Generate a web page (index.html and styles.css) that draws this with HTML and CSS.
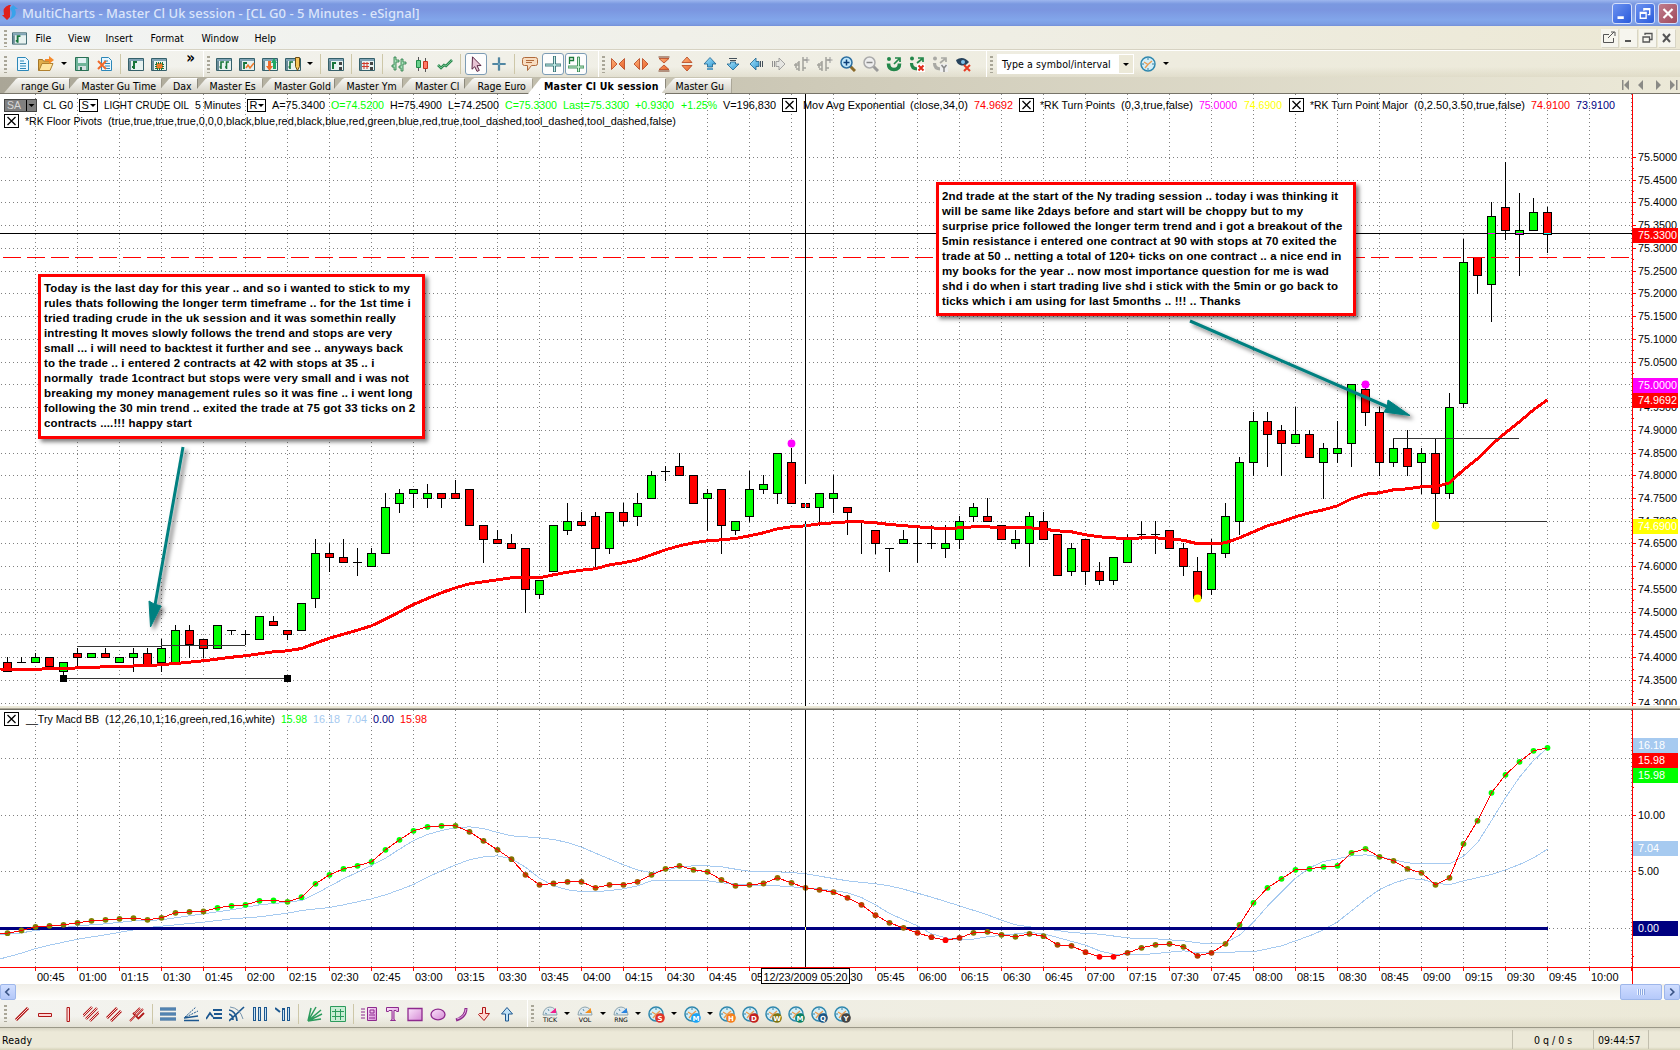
FILE: index.html
```
<!DOCTYPE html>
<html>
<head>
  <meta charset="utf-8">
  <title>MultiCharts</title>
  <link rel="stylesheet" href="styles.css">
</head>
<body>
<svg class="sprite">
  <defs>
    <linearGradient id="gOrange" x1="0" y1="0" x2="1" y2="1"><stop offset="0" stop-color="#ffb27a"/><stop offset="1" stop-color="#e8622a"/></linearGradient>
    <linearGradient id="gBlue" x1="0" y1="0" x2="1" y2="1"><stop offset="0" stop-color="#a8e6ff"/><stop offset="1" stop-color="#2f96cf"/></linearGradient>
    <linearGradient id="gPink" x1="0" y1="0" x2="1" y2="1"><stop offset="0" stop-color="#fbe4fb"/><stop offset="1" stop-color="#d58bd5"/></linearGradient>
  </defs>
  <symbol id="win" viewBox="0 0 16 16"><path d="M.5 2.500h15v12H.5z" fill="#e8f2f0" stroke="#35606a"/><path d="M1 3h14v2H1z" fill="#7fa3b5"/><path d="M1 5h2v9H1z" fill="#6a8b98"/></symbol>
  <symbol id="bars" viewBox="0 0 16 16"><path d="M5 13V6h3M3.500 11H5M10.500 13V6H13M9 11h1.500" fill="none" stroke="#17753b" stroke-width="1.600"/></symbol>
  <symbol id="logo" viewBox="0 0 16 16"><path d="M7 1Q0 3 2 11H0l5 5 3-3V6Q7 3 9 1z" fill="#e0201c"/><path d="M9 15q7-3 4-10h3l-5-4-3 4q4 3 0 10z" fill="#39a3ea"/></symbol>
  <symbol id="chartwin" viewBox="0 0 16 16"><use href="#win"/><path d="M6 13V6h3M4 11h2" fill="none" stroke="#17753b" stroke-width="2"/></symbol>
  <symbol id="doc" viewBox="0 0 16 16"><path d="M2.500 1.500h8l3 3v10h-11z" fill="#e8f7ff" stroke="#2c87b8"/><path d="M5 5h4M5 7.500h6M5 10h6M5 12.500h6" stroke="#2c87b8"/></symbol>
  <symbol id="open" viewBox="0 0 16 16"><path d="M.5 14.500v-11h4l1 1.500h6v9z" fill="#e0ad4a" stroke="#a57628"/><path d="M1 14.500L4 7.500h11l-3 7z" fill="#ffe6a0" stroke="#b0812f"/><path d="M7 5V3h4V0l5 4-5 4V5z" fill="#f58a2b"/></symbol>
  <symbol id="save" viewBox="0 0 16 16"><path d="M1.500 1.500h13v13h-13z" fill="#6fb49a" stroke="#2a7055"/><path d="M4 2h8v5H4z" fill="#e4f2f4"/><path d="M4 10h8v4H4z" fill="#d5dfe2"/><path d="M6 11h2v3H6z" fill="#2a7055"/></symbol>
  <symbol id="del" viewBox="0 0 16 16"><path d="M4.500 1.500h7l3 3v10h-10z" fill="#e8f7ff" stroke="#2c87b8"/><path d="M7 5h4M8 7.500h5M8 10h5M8 12.500h5" stroke="#2c87b8"/><path d="M1 5l8 8M9 5l-8 8" stroke="#ef6a2b" stroke-width="2"/></symbol>
  <symbol id="chip" viewBox="0 0 16 16"><use href="#win"/><path d="M5 7h7v6H5z" fill="#ef7a2b" stroke="#17753b" stroke-width="2" stroke-dasharray="1 1"/></symbol>
  <symbol id="w-bars" viewBox="0 0 16 16"><use href="#win"/><use href="#bars"/></symbol>
  <symbol id="w-line" viewBox="0 0 16 16"><use href="#win"/><path d="M5 13V7h3" fill="none" stroke="#17753b" stroke-width="1.800"/><path d="M7 12l2-3 2 3 4-5" fill="none" stroke="#ef7a2b" stroke-width="1.500"/></symbol>
  <symbol id="w-arr" viewBox="0 0 16 16"><use href="#win"/><path d="M6 5v5H4l3.500 5L11 10H9V5z" fill="#ef6a2b"/><path d="M11 13V7H9l3-5 3 5h-1v6z" fill="#21a765"/></symbol>
  <symbol id="w-pen" viewBox="0 0 16 16"><use href="#win"/><path d="M5 13V6h3M3.500 11H5" fill="none" stroke="#17753b" stroke-width="1.600"/><path d="M10.500 1.500h4v9l-2 4-2-4z" fill="#f6c55a" stroke="#6b4a14"/></symbol>
  <symbol id="w-set" viewBox="0 0 16 16"><use href="#win"/><path d="M5 13V7h3" fill="none" stroke="#17753b" stroke-width="2"/><path d="M11 6h3v3h-3zM11 11h3v3h-3z" fill="#444"/></symbol>
  <symbol id="w-grid" viewBox="0 0 16 16"><use href="#win"/><path d="M3 7.500h7M3 10.500h7M5 6v7M8 6v7" stroke="#d0392b"/><path d="M11 6h3v3h-3zM11 11h3v3h-3z" fill="#444"/></symbol>
  <symbol id="ohlc" viewBox="0 0 16 16"><path d="M3 1h2v3h3v2H5v8H3v-3H1V9h2zM10 3h2v3h3v2h-3v7h-2v-3H8v-2h2z" fill="#a8e0b8" stroke="#247a43" stroke-width=".8"/></symbol>
  <symbol id="candles" viewBox="0 0 16 16"><path d="M4.500 1v14M11.500 2v14" stroke="#555"/><path d="M2.500 4.500h4v7h-4z" fill="#68cf8b" stroke="#1f8a47"/><path d="M9.500 5.500h4v7h-4z" fill="#ff7a66" stroke="#c8321c"/></symbol>
  <symbol id="check" viewBox="0 0 16 16"><path d="M1 9l3 3 3-3 2 1 6-6" fill="none" stroke="#2a8a50" stroke-width="2.600"/><path d="M1 9l3 3 3-3 2 1 6-6" fill="none" stroke="#7fc896" stroke-width=".8"/></symbol>
  <symbol id="cursor" viewBox="0 0 16 16"><path d="M4.500.8l8.500 8.700-4 .2 2.300 4.700-2.300 1-2.200-4.700-2.800 2.500z" fill="#e8c4d4" stroke="#5a2745"/></symbol>
  <symbol id="plus" viewBox="0 0 16 16"><path d="M8 1.500v13M1.500 8h13" stroke="#27607f" stroke-width="2.200"/><path d="M8 2v12M2 8h12" stroke="#9ed1ea" stroke-width=".7"/></symbol>
  <symbol id="note" viewBox="0 0 16 16"><path d="M2.500 1.500h11q2 0 2 2v4q0 2-2 2h-4l-4 5v-5h-3q-2 0-2-2v-4q0-2 2-2z" fill="#f8dcc0" stroke="#b06a3c"/><path d="M4 4.500h8M4 6.500h6" stroke="#b06a3c"/></symbol>
  <symbol id="crossT" viewBox="0 0 16 16"><path d="M8.500 0h2v8H16v2h-5.500v6h-2v-6H0V8h8.500z" fill="#c9f0ea" stroke="#1f5d63" stroke-width=".8"/></symbol>
  <symbol id="crossP" viewBox="0 0 16 16"><path d="M9.500 1h2v9H16v2h-4.500v4h-2v-4H0v-2h9.500z" fill="#d0f4d8" stroke="#1d7a3b" stroke-width=".8"/><path d="M1.500 8V1.500h4v3h-4" fill="none" stroke="#1d7a3b" stroke-width="1.300"/></symbol>
  <symbol id="hin" viewBox="0 0 16 16"><path d="M1.500 2.500v11L7 8zM14.500 2.500v11L9 8z" fill="url(#gOrange)" stroke="#b4431c" stroke-width=".8"/></symbol>
  <symbol id="hout" viewBox="0 0 16 16"><path d="M6.500 2.500v11L1 8zM9.500 2.500v11L15 8z" fill="url(#gOrange)" stroke="#b4431c" stroke-width=".8"/></symbol>
  <symbol id="vin" viewBox="0 0 16 16"><path d="M3 2.500h10L8 7zM3 13.500h10L8 9z" fill="url(#gOrange)" stroke="#b4431c" stroke-width=".8"/><path d="M2.500 1h11M2.500 15h11" stroke="#7a3a20"/></symbol>
  <symbol id="vout" viewBox="0 0 16 16"><path d="M3 6.500h10L8 1zM3 9.500h10L8 15z" fill="url(#gOrange)" stroke="#b4431c" stroke-width=".8"/></symbol>
  <symbol id="up" viewBox="0 0 16 16"><path d="M8 1.500l6 6.500h-3.500v3h-5V8H2z" fill="url(#gBlue)" stroke="#1d628e" stroke-width=".8"/><path d="M5 13h6" stroke="#2f86ba" stroke-width="1.500"/></symbol>
  <symbol id="down" viewBox="0 0 16 16"><path d="M8 14L2 8h3.500V6h5v2H14z" fill="url(#gBlue)" stroke="#1d628e" stroke-width=".8"/><path d="M4 2.500h8M5 4.500h6" stroke="#44505a"/></symbol>
  <symbol id="left" viewBox="0 0 16 16"><path d="M2 8l6-6v3.500h3v5H8V14z" fill="url(#gBlue)" stroke="#1d628e" stroke-width=".8"/><path d="M12.500 5v6M14.500 5v6" stroke="#44505a"/></symbol>
  <symbol id="right" viewBox="0 0 16 16"><path d="M14 8L8 2v3.500H5v5h3V14z" fill="#e6e6e2" stroke="#909090" stroke-width=".8"/><path d="M3.500 5v6M1.500 5v6" stroke="#909090"/></symbol>
  <symbol id="gbars" viewBox="0 0 16 16"><path d="M9 1v14M5 5v10M9 4h4M9 12h3M5 13H2M5 7H3M0 9h5M2 7v5" stroke="#a3a39c" stroke-width="1.500"/><path d="M13 1v6M10.500 4h5" stroke="#999"/></symbol>
  <symbol id="zin" viewBox="0 0 16 16"><path d="M10 10l5 5" stroke="#8a6a2a" stroke-width="3"/><circle cx="6.500" cy="6.500" r="5.500" fill="#bfe6fb" stroke="#2c6ea0" stroke-width="1.500"/><path d="M6.500 3.500v6M3.500 6.500h6" stroke="#0c3f78" stroke-width="1.500"/></symbol>
  <symbol id="zout" viewBox="0 0 16 16"><path d="M10 10l5 5" stroke="#999" stroke-width="3"/><circle cx="6.500" cy="6.500" r="5.500" fill="#eee" stroke="#aaa" stroke-width="1.500"/><path d="M3.500 6.500h6" stroke="#888" stroke-width="1.500"/></symbol>
  <symbol id="magnet" viewBox="0 0 16 16"><path d="M2.500 7.500q0 6 5.500 6t5.500-6" fill="none" stroke="currentColor" stroke-width="3.600"/><path d="M8 8l5-5M9 2h5v4" fill="none" stroke="currentColor" stroke-width="1.700"/><circle cx="3" cy="3" r="2" fill="currentColor"/></symbol>
  <symbol id="magS" viewBox="0 0 16 16"><path d="M2.500 7q0 6 6 6" fill="none" stroke="currentColor" stroke-width="3.200"/><path d="M8 7l5-4M9 2h5v4" fill="none" stroke="currentColor" stroke-width="1.700"/><circle cx="3" cy="2.500" r="2" fill="currentColor"/></symbol>
  <symbol id="eye" viewBox="0 0 16 16"><path d="M1 4q7-5 13 2-4 5-9 3Q2 8 1 4z" fill="#27435c"/><circle cx="8" cy="6" r="2" fill="#7ec2ec"/><path d="M9 9l6 6M15 9l-6 6" stroke="#e63a22" stroke-width="2"/></symbol>
  <symbol id="clock" viewBox="0 0 16 16"><circle cx="8" cy="8" r="7" fill="#d3eff9" stroke="#2f87ad" stroke-width="1.500"/><path d="M4 6l4 2.500L12 5M8 8.500L5 12" fill="none" stroke="#ee9a4c" stroke-width="1.300"/><path d="M8 2v2M8 12v2M2 8h2M12 8h2" stroke="#3b7f9d"/></symbol>
  <symbol id="gauge" viewBox="0 0 16 16"><path d="M1 9a7 8 0 0 1 14 0z" fill="#dfeaf0" stroke="#8fa5ae"/><path d="M3 7l2 1M6 3l1 2" stroke="#5f94ad"/></symbol>
  <symbol id="tline" viewBox="0 0 16 16"><path d="M2 14L14 2" stroke="#b01818" stroke-width="3"/><path d="M2 14L14 2" stroke="#ffd0d0"/></symbol>
  <symbol id="hline" viewBox="0 0 16 16"><path d="M1.500 7.500h13v3h-13z" fill="#ffd8d8" stroke="#b01818"/></symbol>
  <symbol id="vline" viewBox="0 0 16 16"><path d="M7 1.500h2.500v14H7z" fill="#ffd8d8" stroke="#b01818"/></symbol>
  <symbol id="chan3" viewBox="0 0 16 16"><path d="M0 10L9 1M3 13L14 2M7 15L16 6" stroke="#b01818" stroke-width="2.400"/><path d="M0 10L9 1M3 13L14 2M7 15L16 6" stroke="#ffd4d4"/></symbol>
  <symbol id="chan2" viewBox="0 0 16 16"><path d="M1 12L11 2M5 15L15 5" stroke="#b01818" stroke-width="2.600"/><path d="M1 12L11 2M5 15L15 5" stroke="#ffd4d4"/></symbol>
  <symbol id="fork" viewBox="0 0 16 16"><path d="M1 15l6-6M4 7l6 6M5 8l6-6M7 10l7-7M10 12l5-5" stroke="#b01818" stroke-width="1.800"/><path d="M1 15L14 3M5 8l6-6" stroke="#ffc4c4" stroke-width=".7"/></symbol>
  <symbol id="fib" viewBox="0 0 16 16"><path d="M0 3h16M0 8h16M0 13h16" stroke="#1c578f" stroke-width="2.800"/><path d="M0 3h16M0 8h16M0 13h16" stroke="#b9d8f2" stroke-width=".7"/></symbol>
  <symbol id="fan" viewBox="0 0 16 16"><path d="M1 14.500h15M1 12L15 10" stroke="#1c578f" stroke-width="1.500"/><path d="M2 11L13 1M3 11l12-6" stroke="#1c578f" stroke-dasharray="2 1"/></symbol>
  <symbol id="fibx" viewBox="0 0 16 16"><path d="M0 13l4-6 3 4M7 4h9M8 8h8M7 12h9" fill="none" stroke="#1c578f" stroke-width="1.800"/></symbol>
  <symbol id="arcs" viewBox="0 0 16 16"><path d="M0 4q7 1 8 11M0 8q4 1 4 6M0 15L15 1" fill="none" stroke="#1c578f" stroke-width="1.700"/><path d="M1 1q10 1 13 12" fill="none" stroke="#7794ac"/></symbol>
  <symbol id="tz" viewBox="0 0 16 16"><path d="M2.500 1v14M7.500 1v14M13.500 1v14" stroke="#1c578f" stroke-width="3"/><path d="M2.500 2v12M7.500 2v12M13.500 2v12" stroke="#c7e2f5"/></symbol>
  <symbol id="tzx" viewBox="0 0 16 16"><path d="M8.500 2v13M13.500 1v14" stroke="#1c578f" stroke-width="3"/><path d="M0 2l5 4" stroke="#1c578f" stroke-width="2"/><path d="M8.500 4v10M13.500 2v12" stroke="#c7e2f5"/></symbol>
  <symbol id="gann" viewBox="0 0 16 16"><path d="M1 15L4 2M1 15L9 1M1 15L14 4M1 15l14-7M1 15l13-2" stroke="#2c9b5c" stroke-width="1.500"/></symbol>
  <symbol id="ggrid" viewBox="0 0 16 16"><path d="M.5.5h15v15H.5z" fill="#c8ecd4" stroke="#2c9b5c"/><path d="M5.500 3v11M10.500 3v11M2 5.500h12M2 10.500h12" stroke="#2c9b5c"/></symbol>
  <symbol id="calc" viewBox="0 0 16 16"><path d="M6.500 1.500h9v13h-9z" fill="url(#gPink)" stroke="#8e2a8e"/><path d="M9 4h4v3H9zM8 9h6M8 12h6M0 3h4M0 6h4M0 9h4M0 12h4" fill="none" stroke="#8e2a8e"/></symbol>
  <symbol id="text" viewBox="0 0 16 16"><path d="M2.500 1.500h12v4h-2l-.5-1H10v9l1.500 1h-5L8 13.500v-9H5l-.5 1h-2z" fill="url(#gPink)" stroke="#8e2a8e"/></symbol>
  <symbol id="rect" viewBox="0 0 16 16"><path d="M1 2.500h14v12H1z" fill="url(#gPink)" stroke="#8e2a8e" stroke-width="1.300"/></symbol>
  <symbol id="oval" viewBox="0 0 16 16"><ellipse cx="8" cy="8.500" rx="7" ry="5.300" fill="url(#gPink)" stroke="#8e2a8e" stroke-width="1.300"/></symbol>
  <symbol id="arc" viewBox="0 0 16 16"><path d="M13 2q0 9-10 12" fill="none" stroke="#8e2a8e" stroke-width="3"/><path d="M13 3q-1 8-9 10" fill="none" stroke="#e3b0e3"/></symbol>
  <symbol id="adn" viewBox="0 0 16 16"><path d="M6.500 1.500h3v6h4L8 14.500 2.500 8.500l1-1h3z" fill="#ffd6d0" stroke="#b01818"/></symbol>
  <symbol id="aup" viewBox="0 0 16 16"><path d="M6.500 15h3V8h4L8 1.500 2.500 8h4z" fill="#bfe2f8" stroke="#1c578f"/></symbol>
</svg>

<div class="window">
  <div class="titlebar">
    <svg class="ic"><use href="#logo"/></svg>
    <span class="title">MultiCharts - Master Cl Uk session - [CL G0 - 5 Minutes - eSignal]</span>
    <div class="winbtns">
      <svg class="wb" viewBox="0 0 20 20"><path d="M5 13h7v3H5z"/></svg>
      <svg class="wb" viewBox="0 0 20 20"><path d="M8 4h8v8h-3v-1.500h1.500V6.500h-5V7H8zM4 8h8v8H4zm1.500 2.500v4h5v-4z" fill-rule="evenodd"/></svg>
      <svg class="wb close" viewBox="0 0 20 20"><path d="M5 5l10 10M15 5L5 15" stroke="#fff" stroke-width="2.400"/></svg>
    </div>
  </div>

  <div class="menubar">
    <i class="grip"></i>
    <svg class="ic"><use href="#chartwin"/></svg>
    <span class="m-file">File</span><span class="m-view">View</span><span class="m-ins">Insert</span><span class="m-fmt">Format</span><span class="m-win">Window</span><span>Help</span>
    <div class="childbtns">
      <svg viewBox="0 0 17 18"><path d="M8 5.500H2.500v8h10V9M7 9l6-6M10 3h4v4" fill="none" stroke="#555"/></svg>
      <svg viewBox="0 0 17 18"><path d="M5 11h6v2H5z" fill="#555"/></svg>
      <svg viewBox="0 0 17 18"><path d="M6 6V4.500h7v6h-2M4 8h6.500v5H4z" fill="none" stroke="#555" stroke-width="1.300"/></svg>
      <svg viewBox="0 0 17 18"><path d="M5 5l7 8M12 5l-7 8" stroke="#555" stroke-width="2"/></svg>
    </div>
  </div>

  <div class="toolbar">
    <div class="band band-std">
      <i class="grip"></i>
      <svg class="ic"><use href="#doc"/></svg>
      <svg class="ic"><use href="#open"/></svg><i class="dd"></i>
      <svg class="ic"><use href="#save"/></svg>
      <svg class="ic"><use href="#del"/></svg>
      <i class="sep"></i>
      <svg class="ic"><use href="#chartwin"/></svg>
      <svg class="ic"><use href="#chip"/></svg>
      <b class="more">»</b>
    </div>
    <div class="band band-chart">
      <i class="grip"></i>
      <svg class="ic"><use href="#w-bars"/></svg>
      <svg class="ic"><use href="#w-line"/></svg>
      <svg class="ic"><use href="#w-arr"/></svg>
      <svg class="ic"><use href="#w-pen"/></svg><i class="dd"></i>
      <i class="sep"></i>
      <svg class="ic"><use href="#w-set"/></svg>
      <i class="sep"></i>
      <svg class="ic"><use href="#w-grid"/></svg>
      <i class="sep"></i>
      <svg class="ic"><use href="#ohlc"/></svg>
      <svg class="ic"><use href="#candles"/></svg>
      <svg class="ic"><use href="#check"/></svg>
      <i class="sep"></i>
      <svg class="ic on"><use href="#cursor"/></svg>
      <svg class="ic"><use href="#plus"/></svg>
      <i class="sep"></i>
      <svg class="ic"><use href="#note"/></svg>
      <svg class="ic on"><use href="#crossT"/></svg>
      <svg class="ic on"><use href="#crossP"/></svg>
    </div>
    <div class="band band-zoom">
      <i class="grip"></i>
      <svg class="ic"><use href="#hin"/></svg>
      <svg class="ic"><use href="#hout"/></svg>
      <svg class="ic"><use href="#vin"/></svg>
      <svg class="ic"><use href="#vout"/></svg>
      <svg class="ic"><use href="#up"/></svg>
      <svg class="ic"><use href="#down"/></svg>
      <svg class="ic"><use href="#left"/></svg>
      <svg class="ic"><use href="#right"/></svg>
      <svg class="ic"><use href="#gbars"/></svg>
      <svg class="ic"><use href="#gbars"/></svg>
      <svg class="ic"><use href="#zin"/></svg>
      <svg class="ic"><use href="#zout"/></svg>
      <svg class="ic green" viewBox="0 0 16 16"><use href="#magnet"/></svg>
      <svg class="ic green" viewBox="0 0 16 16"><use href="#magS"/><path d="M8 8h8v8H8z" fill="#fff"/><path d="M9.500 9.500l5 5M14.500 9.500l-5 5" stroke="#e02a1a" stroke-width="2"/></svg>
      <svg class="ic grey" viewBox="0 0 16 16"><use href="#magS"/><path d="M8 8h8v8H8z" fill="#eee"/><path d="M9.500 9l2.500 3 2.500-3M12 12v4" stroke="#888" stroke-width="1.500" fill="none"/></svg>
      <svg class="ic"><use href="#eye"/></svg>
    </div>
    <div class="band band-sym">
      <i class="grip"></i>
      <div class="combo"><span>Type a symbol/interval</span><i class="dd"></i></div>
      <svg class="ic clk"><use href="#clock"/></svg><i class="dd"></i>
    </div>
  </div>

  <div class="tabs">
    <span class="tab t1">range Gu</span>
    <span class="tab t2">Master Gu Time</span>
    <span class="tab t3">Dax</span>
    <span class="tab t4">Master Es</span>
    <span class="tab t5">Master Gold</span>
    <span class="tab t6">Master Ym</span>
    <span class="tab t7">Master Cl</span>
    <span class="tab t8">Rage Euro</span>
    <span class="tab t9 active">Master Cl Uk session</span>
    <span class="tab t10">Master Gu</span>
    <svg class="tabnav" viewBox="0 0 60 12"><path d="M2 1v10h1.500V1zM9 1v10L4 6zM23 1v10l-5-5zM36 1v10l5-5zM50 1v10l5-5zM56 1v10h1.500V1z"/></svg>
  </div>

  <div class="chart">
    <svg id="plot" width="1680" height="890" viewBox="0 94 1680 890"></svg>
    <div class="callout c1">
      <p>Today is the last day for this year .. and so i wanted to stick to my</p>
      <p>rules thats following the longer term timeframe .. for the 1st time i</p>
      <p>tried trading crude in the uk session and it was somethin really</p>
      <p>intresting It moves slowly follows the trend and stops are very</p>
      <p>small ... i will need to backtest it further and see .. anyways back</p>
      <p>to the trade .. i entered 2 contracts at 42 with stops at 35 .. i</p>
      <p>normally&nbsp; trade 1contract but stops were very small and i was not</p>
      <p>breaking my money management rules so it was fine .. i went long</p>
      <p>following the 30 min trend .. exited the trade at 75 got 33 ticks on 2</p>
      <p>contracts ....!!! happy start</p>
    </div>
    <div class="callout c2">
      <p>2nd trade at the start of the Ny trading session .. today i was thinking it</p>
      <p>will be same like 2days before and start will be choppy but to my</p>
      <p>surprise price followed the longer term trend and i got a breakout of the</p>
      <p>5min resistance i entered one contract at 90 with stops at 70 exited the</p>
      <p>trade at 50 .. netting a total of 120+ ticks on one contract .. a nice end in</p>
      <p>my books for the year .. now most importance question for me is wad</p>
      <p>shd i do when i start trading live shd i stick with the 5min or go back to</p>
      <p>ticks which i am using for last 5months .. !!! .. Thanks</p>
    </div>
  </div>

  <div class="scroll">
    <svg class="sb" viewBox="0 0 16 16"><path d="M9.500 4l-4 4 4 4" /></svg>
    <div class="thumb"><i></i><i></i><i></i><i></i></div>
    <svg class="sb" viewBox="0 0 16 16"><path d="M6 4l4 4-4 4"/></svg>
  </div>

  <div class="toolbar drawbar">
    <div class="band band-draw">
      <i class="grip"></i>
      <svg class="ic"><use href="#tline"/></svg>
      <svg class="ic"><use href="#hline"/></svg>
      <svg class="ic"><use href="#vline"/></svg>
      <svg class="ic"><use href="#chan3"/></svg>
      <svg class="ic"><use href="#chan2"/></svg>
      <svg class="ic"><use href="#fork"/></svg>
      <i class="sep"></i>
      <svg class="ic"><use href="#fib"/></svg>
      <svg class="ic"><use href="#fan"/></svg>
      <svg class="ic"><use href="#fibx"/></svg>
      <svg class="ic"><use href="#arcs"/></svg>
      <svg class="ic"><use href="#tz"/></svg>
      <svg class="ic"><use href="#tzx"/></svg>
      <i class="sep"></i>
      <svg class="ic"><use href="#gann"/></svg>
      <svg class="ic"><use href="#ggrid"/></svg>
      <i class="sep"></i>
      <svg class="ic"><use href="#calc"/></svg>
      <svg class="ic"><use href="#text"/></svg>
      <svg class="ic"><use href="#rect"/></svg>
      <svg class="ic"><use href="#oval"/></svg>
      <svg class="ic"><use href="#arc"/></svg>
      <svg class="ic"><use href="#adn"/></svg>
      <svg class="ic"><use href="#aup"/></svg>
    </div>
    <div class="band band-res">
      <i class="grip"></i>
      <svg class="ic" viewBox="0 0 16 16"><use href="#gauge"/><path d="M8 7l6-5v5z" fill="#f0208a"/><text x="8" y="16" class="gt">TICK</text></svg><i class="dd"></i>
      <svg class="ic" viewBox="0 0 16 16"><use href="#gauge"/><path d="M8 7l6-5v5z" fill="#f5901e"/><text x="8" y="16" class="gt">VOL</text></svg><i class="dd"></i>
      <svg class="ic" viewBox="0 0 16 16"><use href="#gauge"/><path d="M8 7l6-5v5z" fill="#2a84e0"/><text x="8" y="16" class="gt">RNG</text></svg><i class="dd"></i>
      <svg class="ic" viewBox="0 0 16 16"><use href="#clock"/><circle cx="12" cy="12" r="4.800" fill="#e03328"/><text x="12" y="14.500" class="bt">S</text></svg><i class="dd"></i>
      <svg class="ic" viewBox="0 0 16 16"><use href="#clock"/><circle cx="12" cy="12" r="4.800" fill="#1aa3f5"/><text x="12" y="14.500" class="bt">M</text></svg><i class="dd"></i>
      <svg class="ic" viewBox="0 0 16 16"><use href="#clock"/><circle cx="12" cy="12" r="4.800" fill="#f5801e"/><text x="12" y="14.500" class="bt">H</text></svg>
      <svg class="ic" viewBox="0 0 16 16"><use href="#clock"/><circle cx="12" cy="12" r="4.800" fill="#c4201e"/><text x="12" y="14.500" class="bt">D</text></svg>
      <svg class="ic" viewBox="0 0 16 16"><use href="#clock"/><circle cx="12" cy="12" r="4.800" fill="#7d7410"/><text x="12" y="14.500" class="bt">W</text></svg>
      <svg class="ic" viewBox="0 0 16 16"><use href="#clock"/><circle cx="12" cy="12" r="4.800" fill="#0d8264"/><text x="12" y="14.500" class="bt">M</text></svg>
      <svg class="ic" viewBox="0 0 16 16"><use href="#clock"/><circle cx="12" cy="12" r="4.800" fill="#1c5482"/><text x="12" y="14.500" class="bt">Q</text></svg>
      <svg class="ic" viewBox="0 0 16 16"><use href="#clock"/><circle cx="12" cy="12" r="4.800" fill="#444"/><text x="12" y="14.500" class="bt">Y</text></svg>
    </div>
  </div>

  <div class="status">
    <span class="ready">Ready</span>
    <span class="quotes">0 q / 0 s</span>
    <span class="time">09:44:57</span>
  </div>
</div>
<script src="chart.js"></script>
</body>
</html>
```

FILE: styles.css
```
body {
    margin: 0;
    width: 1680px;
    height: 1050px;
    overflow: hidden;
    font-family: "DejaVu Sans Condensed", "DejaVu Sans", sans-serif;
    font-stretch: condensed;
    font-size: 10.5px;
    color: #000;
}

.sprite {
    position: absolute;
    width: 0;
    height: 0;
}

.window {
    display: flex;
    flex-direction: column;
    height: 1050px;
    background: #ece9d8;
}

.ic {
    width: 16px;
    height: 16px;
    margin: 0 3.5px;
    flex: none;
    overflow: visible;
}

/* title bar */
.titlebar {
    height: 26px;
    display: flex;
    align-items: center;
    background: linear-gradient(#9db6ee 0, #7a98e0 4px, #7b96e0 10px, #82a6ea 20px, #7d9ee4 24px, #748fd8 26px);
}

.titlebar .ic {
    margin: 0 4px 2px 2px;
}

.title {
    font-family: "Noto Sans", sans-serif;
    font-stretch: normal;
    font-weight: 500;
    font-size: 13px;
    letter-spacing: .03px;
    color: #dbe5fa;
    white-space: nowrap;
}

.winbtns {
    display: flex;
    gap: 3px;
    margin-left: auto;
    margin-right: 2px;
}

.wb {
    width: 18px;
    height: 19px;
    border: 1px solid #d5dffa;
    border-radius: 3px;
    background: linear-gradient(135deg, #6c92f0, #2a5bdc);
    fill: #fff;
}

.wb.close {
    background: linear-gradient(135deg, #c07c8c, #a04a5c);
}

/* menu */
.menubar {
    height: 24px;
    display: flex;
    align-items: center;
    background: linear-gradient(90deg, #f2f4f3, #efeee4 60%, #ece8d4);
}

.grip {
    width: 3px;
    height: 17px;
    margin-left: 4px;
    flex: none;
    background: repeating-linear-gradient(#a9a698 0 2px, transparent 2px 4px);
}

.menubar .ic {
    width: 15px;
    margin: 0 8.5px 0 5px;
}

.m-file { width: 32.5px; }
.m-view { width: 37.5px; }
.m-ins { width: 45px; }
.m-fmt { width: 51px; }
.m-win { width: 53px; }

.childbtns {
    display: flex;
    gap: 2px;
    margin-left: auto;
    margin-right: 5px;
}

.childbtns svg {
    width: 17px;
    height: 18px;
    background: #f6f5ee;
    box-shadow: 1px 1px 0 #d8d5c5;
}

/* toolbars */
.toolbar {
    height: 26px;
    display: flex;
    border-top: 1px solid #fff;
    box-shadow: 0 -1px 0 #d6d2c2;
    background: linear-gradient(transparent 60%, rgba(200, 194, 168, .35)), linear-gradient(90deg, #f3f3ef, #ece9d8);
}

.band {
    display: flex;
    align-items: center;
    flex: none;
    box-sizing: border-box;
}

.band-std { width: 203px; }
.band-std .grip { margin-right: 4.5px; }
.band-chart { width: 395px; }
.band-zoom { width: 388px; }
.band-chart, .band-zoom, .band-sym, .band-res { border-left: 1px solid #fff; }
.band-chart .grip { margin-left: 3px; margin-right: 2px; }
.band-zoom .grip { margin-left: 3px; margin-right: 1px; }
.band-sym .grip { margin-left: 3px; margin-right: 4px; }
.band-std .more { margin-left: 16px; font-size: 15px; line-height: 10px; margin-bottom: 12px; }

.dd {
    width: 12.5px;
    height: 4px;
    flex: none;
    display: flex;
    justify-content: center;
}

.dd::before {
    content: '';
    border: 3px solid transparent;
    border-top-color: #000;
    border-bottom: 0;
}

.sep {
    width: 8.2px;
    height: 20px;
    flex: none;
    background: linear-gradient(#cdc7a8, #cdc7a8) center / 1px 100% no-repeat;
}

.on {
    width: 16px;
    margin: 0 .5px;
    padding: 2px;
    border: 1px solid #7d9cb5;
    border-radius: 3px;
    background: #fdfdfd;
}

.green { color: #23874a; }
.grey { color: #a9a9a4; }

.combo {
    width: 137px;
    height: 20px;
    display: flex;
    align-items: center;
    justify-content: space-between;
    background: #fff;
    white-space: nowrap;
}

.combo span {
    padding-left: 5px;
    letter-spacing: .1px;
}

.combo .dd {
    width: 14px;
    height: 18px;
    align-items: center;
    margin-right: 1px;
    background: #ece9d8;
}

.clk { margin-left: 6px; }

/* workspace tabs */
.tabs {
    height: 17px;
    display: flex;
    align-items: flex-end;
    padding-left: 4px;
    background: linear-gradient(90deg, #aaa697, #cfcbb9 50%, #ece9d8);
    border-bottom: 1px solid #777469;
    box-sizing: border-box;
}

.tab {
    box-sizing: border-box;
    height: 15px;
    line-height: 15px;
    margin-right: -4.5px;
    padding-left: 17px;
    white-space: nowrap;
    background: linear-gradient(#f6f6f3, #d3d0c4);
    clip-path: polygon(0 100%, 12px 1px, 14px 0, calc(100% - 1px) 0, 100% 1px, 100% 100%);
    border-right: 1px solid #8b887c;
    border-top: 1px solid #fff;
}

.t1 { width: 66px; }
.t2 { width: 96px; }
.t3 { width: 41px; }
.t4 { width: 69px; }
.t5 { width: 77px; }
.t6 { width: 72px; }
.t7 { width: 67px; }
.t8 { width: 72px; }
.t9 { width: 138px; }
.t10 { width: 70px; }

.tab.t2, .tab.t3, .tab.t4, .tab.t5, .tab.t6 { padding-left: 16px; }
.tab.t10 { padding-left: 14px; }

.active {
    height: 16px;
    margin-bottom: -1px;
    background: #fff;
    font-weight: bold;
    letter-spacing: .2px;
    position: relative;
}

.tab.active { padding-left: 16px; }

.tabnav {
    width: 60px;
    height: 12px;
    margin: 0 0 2px auto;
    fill: #8a8a86;
}

/* chart */
.chart {
    position: relative;
    height: 890px;
    background: #fff;
}

#plot { display: block; }

#plot text {
    font-family: "Liberation Sans", Arial, sans-serif;
    font-stretch: normal;
    font-size: 11px;
    white-space: pre;
}

.callout {
    position: absolute;
    box-sizing: border-box;
    border: 3px solid #f00;
    background: #fff;
    box-shadow: 3px 3px 4px rgba(0, 0, 0, .5);
    font: bold 11.5px/15px "Liberation Sans", Arial, sans-serif;
    letter-spacing: .12px;
    padding: 4px 0 0 3px;
}

.callout p {
    margin: 0;
    white-space: nowrap;
}

.c1 {
    left: 38px;
    top: 180px;
    width: 387px;
    height: 165px;
}

.c2 {
    left: 936px;
    top: 88px;
    width: 420px;
    height: 134px;
}

/* scrollbar */
.scroll {
    height: 16px;
    display: flex;
    background: linear-gradient(#f1efe8, #fefefc);
}

.sb {
    width: 14px;
    height: 14px;
    border: 1px solid #9db6ea;
    border-radius: 2px;
    background: linear-gradient(#d0deff, #b3c7f8);
    fill: none;
    stroke: #3c5688;
    stroke-width: 2;
}

.thumb {
    width: 40px;
    height: 14px;
    margin-left: auto;
    margin-right: 2px;
    border: 1px solid #9db6ea;
    border-radius: 2px;
    background: linear-gradient(#cfdcff, #b5c9fa);
    display: flex;
    justify-content: center;
    align-items: center;
}

.thumb i {
    width: 1px;
    height: 6px;
    background: #eef4ff;
    border-right: 1px solid #8ca8e0;
}

/* drawing toolbar */
.drawbar {
    height: 27px;
    border-top: 0;
    box-shadow: none;
    border-bottom: 1px solid #9b9888;
}

.band-draw { width: 527px; }
.band-draw .grip { margin-right: 3px; }
.band-draw .sep { width: 8.5px; }
.band-res .grip { margin-left: 3px; margin-right: 4px; }
.band-res .dd { width: 12.6px; }

.gt {
    font: 6.2px "DejaVu Sans", sans-serif;
    text-anchor: middle;
}

.bt {
    font: bold 7px "DejaVu Sans", sans-serif;
    text-anchor: middle;
    fill: #fff;
}

/* status bar */
.status {
    height: 22px;
    display: flex;
    align-items: center;
    background: linear-gradient(#d9d6c5, #ece9d8 4px, #ece9d8 19px, #d5d2b8);
}

.status span { padding-top: 1px; }

.status .ready {
    flex: 1;
    padding-left: 2px;
    letter-spacing: .2px;
}

.quotes {
    width: 80px;
    text-align: center;
    border-left: 1px solid #c2bfae;
    line-height: 18px;
}

.time {
    width: 50px;
    padding-left: 4px;
    margin-right: 31px;
    border-left: 1px solid #c2bfae;
    border-right: 1px solid #c2bfae;
    line-height: 18px;
}
```

FILE: chart.js
```
// bars as [open, high, low, close], in ticks above 74.00
const bars = [
  [39,40,37,37],[39,40,39,39],[39,41,39,40],[40,40,38,38],[37,39,36,39],[41,42,38,40],[40,41,40,41],[41,42,40,40],[39,40,39,40],[40,42,37,41],
  [41,42,38,38],[39,44,37,42],[39,47,39,46],[46,47,40,43],[44,44,40,42],[42,47,42,47],[46,46,45,46],[45,46,43,45],[44,49,44,49],[48,49,47,47],
  [46,46,44,45],[46,52,46,52],[53,66,51,63],[63,65,59,62],[62,66,61,61],[61,64,58,61],[60,64,60,63],[63,76,63,73],[74,77,72,76],[76,77,73,77],
  [75,78,73,76],[76,76,73,75],[76,79,75,75],[77,77,69,69],[69,69,61,66],[66,68,65,65],[65,67,64,64],[64,64,50,55],[54,57,53,57],[59,69,59,69],
  [68,74,67,70],[70,72,69,69],[71,72,60,64],[64,72,63,72],[72,74,69,70],[71,76,69,74],[75,81,75,80],[81,82,79,81],[82,85,80,80],[80,80,74,74],
  [75,77,68,76],[77,77,63,69],[68,70,67,70],[71,81,70,77],[77,80,76,78],[76,85,74,85],[83,86,74,74],[74,78,70,73],[73,76,69,76],[75,80,72,76],
  [73,73,67,72],[70,70,63,70],[68,68,63,65],[64,64,59,64],[65,68,65,66],[65,69,61,65],[65,69,64,65],[64,69,62,65],[66,71,64,70],[71,74,70,73],
  [71,75,70,70],[69,69,66,66],[65,68,64,66],[65,72,60,71],[70,72,66,66],[67,67,58,58],[59,65,58,64],[66,66,56,59],[59,61,56,57],[57,62,56,62],
  [61,67,61,66],[67,70,66,67],[67,70,63,67],[68,68,64,64],[64,65,58,60],[59,62,53,53],[55,66,54,63],[63,74,62,71],[70,84,67,83],[83,94,80,92],
  [92,94,82,89],[90,91,80,87],[87,95,87,89],[89,90,84,84],[83,87,75,86],[85,92,83,86],[87,100,82,100],[99,100,91,94],[94,95,80,83],[83,88,82,86],
  [86,90,80,82],[83,86,76,85],[85,88,70,76],[76,98,75,95],[96,132,95,127],[128,128,120,124],[122,140,114,137],[139,149,132,134],[133,142,124,134],[134,141,134,138],
  [138,139,129,133]
];

// moving average, [bar, y]
const ma = [[-.5,669.3],[2,668.7],[4.5,667.7],[8,665.7],[10,665.3],[12,663],[14,660.3],[16,656.7],[17,655.3],[19,651.3],[20,650.3],[21,648],[22,642.7],[23,637.7],[24,633.7],[25,629.7],[26,625.3],[27,618.7],[28,611.3],[29,604],[30,598],[31,592.3],[32,587.3],[33,583.3],[34,581.3],[35,579.3],[36,577.3],[38,577.3],[39,574.3],
  [40,571.7],[41,569.7],[42,568.3],[43,564.3],[44,562.3],[45,559.3],[46,554.3],[47,549.3],[48,545.3],[49,542.3],[50,540.3],[51,539.3],[52,538],[53,535.3],[54,532.3],[55,528.3],[56,526.3],[57,525.3],[58,523.3],[59,522.3],[60,521.3],[61,521.3],[62,522.3],[63,524],[65,526.3],[67,528.3],[69,526.3],[70,526.3],[71,527.3],[73,527.3],[74,528.7],[75,530.3],[76,531.3],[77,534.3],[78,536.3],
  [80,538.3],[81,537.3],[82,537.3],[83,538.7],[84,539.7],[85,543.3],[86,543.3],[87,542.3],[88,537.3],[89,531.3],[90,525.3],[91,521.3],[92,516.3],[93,512.3],[94,509.3],[95,505.3],[96,498.3],[97,493.7],[98,492.3],[99,489.3],[100,488.3],[101,486.3],[102,486.3],[103,482.3],[104,469.3],[105,458.3],[106,444.3],[107,432.3],[108,421.3],[109,409.3],[110,399.3]];

// lower study values are thirds of a pixel below y = 700
const macd = [698,690,679,676,673,667,661,658,655,653,658,652,637,634,633,622,616,613,601,600,604,590,550,523,505,496,484,448,418,391,379,376,376,394,421,448,476,523,553,549,544,544,562,553,553,544,523,505,496,508,514,538,556,553,549,532,547,562,568,575,592,613,644,667,682,697,710,719,712,697,694,703,709,700,707,733,736,755,769,769,757,742,733,730,739,766,757,730,673,607,562,535,508,505,499,496,457,445,469,481,505,517,553,532,430,361,277,223,184,151,142];
const upper = [[-.5,703],[1,697],[2,690],[4,681],[5,676],[7,670],[9,661],[11,658],[12,652],[14,640],[16,628],[18,613],[20,605],[21,600],[22,580],[24,535],[26,495],[27,473],[28,446],[29,420],[30,402],[31,390],[32,382],[33,379],[34,384],[35,396],[36,406],[38,412],[39,417],[40,426],[41,440],[42,458],[44,493],[45,508],[46,517],[47,510],[48,499],[49,496],[50,496],[51,499],[52,506],[53,512],[55,514],[56,516],[57,520],[59,534],[60,541],[62,550],[63,556],[64,566],[66,590],[68,616],[70,643],[71,659],[72,673],[73,679],[74,684],[76,696],[78,701],[80,712],[81,715],[82,715],[84,721],[85,727],[86,730],[87,727],[88,704],[89,665],[90,617],[92,533],[93,502],[94,483],[95,475],[96,466],[97,463],[98,469],[99,478],[100,487],[101,490],[103,490],[104,467],[105,427],[106,360],[107,292],[108,230],[109,180],[110,142]];
const lower = [[-.5,775],[1,758],[2,744],[3,734],[5,716],[7,703],[9,688],[10,681],[12,673],[14,665],[16,655],[18,649],[20,638],[21,630],[23,621],[24,613],[26,595],[27,583],[28,568],[29,552],[30,530],[31,511],[32,493],[33,478],[34,469],[35,466],[36,475],[37,500],[38,533],[39,556],[40,568],[41,573],[42,574],[43,570],[44,565],[45,556],[46,541],[50,541],[51,547],[54,556],[55,556],[57,562],[59,570],[60,577],[61,591],[62,613],[63,639],[65,676],[66,700],[67,712],[68,719],[69,716],[70,709],[72,700],[73,696],[74,700],[75,711],[77,734],[78,751],[79,761],[80,763],[81,763],[84,751],[85,757],[86,757],[88,754],[89,754],[90,745],[91,736],[93,706],[94,688],[95,664],[96,631],[97,597],[98,567],[99,548],[100,535],[101,536],[102,548],[103,553],[104,541],[106,522],[107,508],[108,492],[109,472],[110,446]];
// dot colour from bar n on
const dotColors = [[0,'#808000'],[15,'#0f0'],[20,'#40d000'],[21,'#0f0'],[31,'#20e000'],[32,'#60a000'],[33,'#807000'],[37,'#a05800'],[39,'#906000'],[42,'#a06000'],[46,'#808000'],[51,'#907000'],[57,'#a06000'],[60,'#b04800'],[63,'#906800'],[65,'#c03000'],[67,'#f00'],[68,'#b03000'],[69,'#807800'],[75,'#a05000'],[77,'#c03000'],[78,'#f00'],[80,'#a05000'],[81,'#807800'],[85,'#b04000'],[87,'#808000'],[88,'#50b000'],[89,'#0f0'],[96,'#30e000'],[98,'#60a000'],[99,'#808000'],[104,'#50b000'],[106,'#0f0'],[111,'']];

const X = i => 7 + 14 * i;
const Y = t => Math.round(157 + (150 - t) * 4.547);
let out = '';

function line(x1, y1, x2, y2, color, extra) {
  out += `<path d="M${x1} ${y1}L${x2} ${y2}" stroke="${color}" ${extra || ''}/>`;
}
function rect(x, y, w, h, fill, stroke) {
  out += `<rect x="${x}" y="${y}" width="${w}" height="${h}" fill="${fill}" ${stroke ? `stroke="${stroke}"` : ''}/>`;
}
function text(x, y, s, color, w) {
  out += `<text x="${x}" y="${y}" fill="${color || '#000'}" ${w ? `textLength="${w}" lengthAdjust="spacingAndGlyphs"` : ''}>${s}</text>`;
}
function curve(pts, color, width) {
  out += `<polyline points="${pts.map(p => p.join()).join(' ')}" fill="none" stroke="${color}" stroke-width="${width}"/>`;
}

out += '<defs><filter id="sh" x="-50%" y="-20%" width="220%" height="150%"><feDropShadow dx="3" dy="3" stdDeviation="2" flood-opacity=".55"/></filter>'
  + '<clipPath id="top"><rect x="0" y="94" width="1680" height="611"/></clipPath></defs>';
out += '<g shape-rendering="crispEdges">';

// grid
for (let x = 35; x < 1632; x += 42) {
  line(x + .5, 94, x + .5, 706, '#808080', 'stroke-dasharray="1 3"');
  line(x + .5, 710, x + .5, 967, '#808080', 'stroke-dasharray="1 3"');
}
for (let t = 30; t <= 150; t += 5) line(1, Y(t) + .5, 1632, Y(t) + .5, '#808080', 'stroke-dasharray="1 3"');
for (const y of [758, 815, 871, 928]) line(1, y + .5, 1632, y + .5, '#808080', 'stroke-dasharray="1 3"');

// candles
bars.forEach(([o, h, l, c], i) => {
  const x = X(i);
  line(x + .5, Y(h), x + .5, Y(l) + 1, '#000');
  if (o === c) line(x - 4, Y(o) + .5, x + 5, Y(o) + .5, '#000');
  else rect(x - 3.5, Y(Math.max(o, c)) + .5, 8, Y(Math.min(o, c)) - Y(Math.max(o, c)), c > o ? '#0f0' : '#f00', '#000');
});

curve(ma.map(p => [X(p[0]) + .5, p[1] + .5]), '#f00', 3);

// trend lines
line(77, 646.5, 161, 646.5, '#333');
line(161, 645.5, 245, 645.5, '#333');
line(63, 678.5, 287, 678.5, '#333');
rect(60, 675, 7, 7, '#000');
rect(284, 675, 7, 7, '#000');
line(1393, 438.5, 1519, 438.5, '#333');
line(1435, 521.5, 1547, 521.5, '#333');

line(3, 257.5, 1632, 257.5, '#f00', 'stroke-dasharray="18 6"');
line(0, 233.5, 1632, 233.5, '#000');
for (const [i, c] of [[106, '#f0f'], [108, '#f0f'], [110, '#0ff']]) line(X(i) - 3, 233.5, X(i) + 4, 233.5, c);

// lower study
curve(upper.map(p => [X(p[0]) + .5, 700.5 + p[1] / 3]), '#a6caf0', 1);
curve(lower.map(p => [X(p[0]) + .5, 700.5 + p[1] / 3]), '#a6caf0', 1);
rect(0, 927, 1548, 3, '#000080');
out += '</g>';

let seg = 0;
macd.forEach((v, i) => {
  while (dotColors[seg + 1][0] <= i) seg++;
  out += `<circle cx="${X(i) + .5}" cy="${700.5 + v / 3}" r="2.900" fill="${dotColors[seg][1]}"/>`;
});
out += '<g shape-rendering="crispEdges">';
curve([[0, 933]].concat(macd.map((v, i) => [X(i) + .5, 700.5 + v / 3])), '#f00', 1);

// crosshair
line(805.5, 94, 805.5, 967, '#000');
line(805.5, Y(78), 805.5, Y(70), '#fff');
line(805.5, Y(74) + 1, 805.5, Y(73), '#0ff');
line(805.5, 524, 805.5, 527, '#0ff');
line(805.5, 927, 805.5, 930, '#ffff7f');

// separator and axes
rect(0, 706, 1680, 2, '#ece9d8');
rect(0, 708, 1680, 1, '#aca899');
rect(0, 709, 1680, 1, '#716f64');
line(1632.5, 94, 1632.5, 706, '#f00');
line(1632.5, 710, 1632.5, 984, '#f00');
line(0, 967.5, 1680, 967.5, '#f00');
for (let x = 35; x < 1632; x += 42) line(x + .5, 968, x + .5, 971, '#f00');
for (let t = 30; t <= 150; t += 5) {
  line(1633, Y(t) + .5, 1636, Y(t) + .5, '#f00');
  if (t > 30) line(1633, Y(t - 2.5) + .5, 1634, Y(t - 2.5) + .5, '#f00');
}
for (const y of [758, 815, 871, 928]) line(1633, y + .5, 1636, y + .5, '#f00');
for (const y of [787, 843, 899, 956]) line(1633, y + .5, 1634, y + .5, '#f00');
out += '</g>';

for (const [i, t, c] of [[56, 87, '#f0f'], [97, 100, '#f0f'], [85, 53, '#ff0'], [102, 69, '#ff0']])
  out += `<circle cx="${X(i) + .5}" cy="${Y(t) + .5}" r="3.900" fill="${c}"/>`;

// axis labels
out += '<g clip-path="url(#top)">';
for (let t = 30; t <= 150; t += 5) text(1638, Y(t) + 4, (74 + t / 100).toFixed(4), '#000', 39);
out += '</g>';
text(1638, 819, '10.00', '#000', 27);
text(1638, 875, '5.00', '#000', 21);
for (const [y, s, c, w] of [[228, '75.3300', '#f00', 39], [378, '75.0000', '#f0f', 39], [393, '74.9692', '#f00', 39], [519, '74.6900', '#ff0', 39],
    [738, '16.18', '#a6caf0', 27], [753, '15.98', '#f00', 27], [768, '15.98', '#0f0', 27], [841, '7.04', '#a6caf0', 21], [921, '0.00', '#000080', 21]]) {
  rect(1633, y, 45, 15, c);
  text(1638, y + 11, s, '#fff', w);
}
for (let n = 0; n < 38; n++) {
  const m = 45 + n * 15;
  text(37 + 42 * n, 981, String(Math.floor(m / 60)).padStart(2, '0') + ':' + String(m % 60).padStart(2, '0'), '#000', 27.5);
}
rect(761.5, 968.5, 88, 15, '#fff', '#000');
text(763.5, 981, '12/23/2009 05:20', '#000', 84);

// status lines: [x, x end, text, colour]
function legend(y, items) {
  for (const [x1, x2, s, c] of items) text(x1, y, s, c, x2 - x1);
}
function closeBox(x, y) {
  rect(x + .5, y + .5, 14, 13, '#fff', '#000');
  out += `<path d="M${x + 3.5} ${y + 3}l8 8m0 -8l-8 8" stroke="#000" stroke-width="1.300"/>`;
}
function dropBox(x, s) {
  rect(x + .5, 99.5, 18, 12, '#fff', '#000');
  text(x + 2.5, 109, s);
  out += `<path d="M${x + 11} 104h6l-3 3z"/>`;
}
rect(4.5, 99.5, 32, 12, '#808080', '#444');
text(7, 109, 'SA', '#d8d8d8', 14);
line(26.5, 100, 26.5, 111, '#000');
out += '<path d="M28.500 104h6l-3 3z"/>';
dropBox(79, 'S');
dropBox(247, 'R');
legend(109, [
  [43, 73, 'CL G0'], [104, 189, 'LIGHT CRUDE OIL'], [195, 241, '5 Minutes'], [272, 325, 'A=75.3400'], [331, 384, 'O=74.5200', '#0f0'],
  [390, 442, 'H=75.4900'], [448, 499, 'L=74.2500'], [505, 557, 'C=75.3300', '#0f0'], [563, 629, 'Last=75.3300', '#0f0'],
  [635, 674, '+0.9300', '#0f0'], [681, 717, '+1.25%', '#0f0'], [723, 776, 'V=196,830'],
  [803, 905, 'Mov Avg Exponential'], [910, 968, '(close,34,0)'], [974, 1013, '74.9692', '#f00'],
  [1040, 1115, '*RK Turn Points'], [1121, 1193, '(0,3,true,false)'], [1199, 1237, '75.0000', '#f0f'], [1244, 1282, '74.6900', '#ff0'],
  [1310, 1408, '*RK Turn Point Major'], [1414, 1525, '(0,2.50,3.50,true,false)'], [1531, 1570, '74.9100', '#f00'], [1576, 1615, '73.9100', '#000080']
]);
closeBox(782, 98);
closeBox(1019, 98);
closeBox(1289, 98);
closeBox(4, 114);
legend(125, [[25, 102, '*RK Floor Pivots'], [108, 676, '(true,true,true,true,0,0,0,black,blue,red,black,blue,red,green,blue,red,true,tool_dashed,tool_dashed,tool_dashed,false)']]);
closeBox(4, 712);
legend(723, [
  [26, 99, '__Try Macd BB'], [105, 275, '(12,26,10,1;16,green,red,16,white)'], [281, 307, '15.98', '#0f0'], [313, 340, '16.18', '#a6caf0'],
  [346, 367, '7.04', '#a6caf0'], [373, 394, '0.00', '#000080'], [400, 427, '15.98', '#f00']
]);

// callout arrows
out += '<g filter="url(#sh)" fill="#008080" stroke="#008080">'
  + '<path d="M183 447L155 605" stroke-width="3"/><path d="M150.500 627L149 601l5 3 7 2z"/>'
  + '<path d="M1190 321L1388 407" stroke-width="3"/><path d="M1410 415.500L1384 412l3-5 1-7z"/></g>';

document.getElementById('plot').innerHTML = out;
```
